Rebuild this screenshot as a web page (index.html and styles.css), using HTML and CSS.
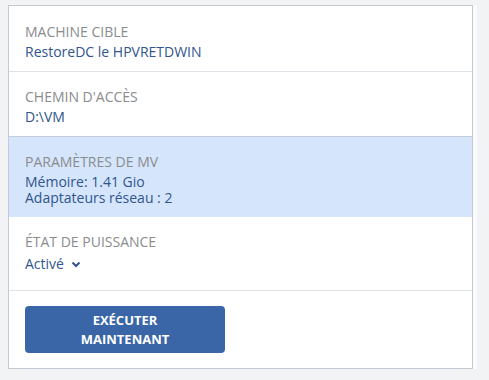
FILE: index.html
```html
<!DOCTYPE html>
<html lang="fr">
<head>
<meta charset="utf-8">
<title>Récupération</title>
<link rel="stylesheet" href="styles.css">
</head>
<body>
<div class="panel">
  <div class="section first">
    <div class="label">MACHINE CIBLE</div>
    <div class="value">RestoreDC le HPVRETDWIN</div>
  </div>
  <div class="section">
    <div class="label">CHEMIN D'ACCÈS</div>
    <div class="value">D:\VM</div>
  </div>
  <div class="section selected">
    <div class="label">PARAMÈTRES DE MV</div>
    <div class="value">Mémoire: 1.41 Gio</div>
    <div class="value next">Adaptateurs réseau : 2</div>
  </div>
  <div class="section power">
    <div class="label">ÉTAT DE PUISSANCE</div>
    <div class="dropdown">Activé
      <svg class="chev" width="10" height="7" viewBox="0 0 10 7"><path d="M1.5 1.5 L5 5 L8.5 1.5" fill="none" stroke="#31558c" stroke-width="2"/></svg>
    </div>
  </div>
  <div class="section actions">
    <button class="run">EXÉCUTER<br>MAINTENANT</button>
  </div>
</div>
</body>
</html>
```
FILE: styles.css
```css
html, body {
  margin: 0;
  padding: 0;
  background: #f2f3f5;
}
body {
  font-family: "Open Sans", "Liberation Sans", sans-serif;
  padding: 5px 0 0 8px;
}
.panel {
  width: 463px;
  background: #fff;
  border: 1px solid #c4cad4;
  box-shadow: 4px 0 0 #fafbfc;
}
.section {
  padding: 15px 16px 11px;
  border-top: 1px solid #dfe2e6;
}
.section.first {
  border-top: none;
  padding-top: 16px;
}
.selected {
  background: #d5e5fb;
  border-top-color: #c4cdd8;
}
.label {
  font-size: 14px;
  line-height: 20px;
  color: #8a8c8f;
}
.value {
  font-size: 14px;
  line-height: 16px;
  color: #31558c;
  margin-top: 2px;
}
.value.next {
  margin-top: 0;
}
.power {
  padding-bottom: 18px;
  border-top: none;
}
.dropdown {
  margin-top: 4px;
  font-size: 14px;
  line-height: 16px;
  color: #31558c;
  display: flex;
  align-items: center;
  gap: 7px;
}
.chev {
  display: block;
  margin-top: 1px;
}
.actions {
  padding: 15px 16px 15px;
}
.run {
  display: block;
  width: 200px;
  height: 47px;
  border: none;
  border-radius: 4px;
  background: #3a66a7;
  color: #fff;
  font-family: "Open Sans", "Liberation Sans", sans-serif;
  font-weight: 700;
  font-size: 13px;
  line-height: 19px;
  padding: 0;
  text-align: center;
}
```
